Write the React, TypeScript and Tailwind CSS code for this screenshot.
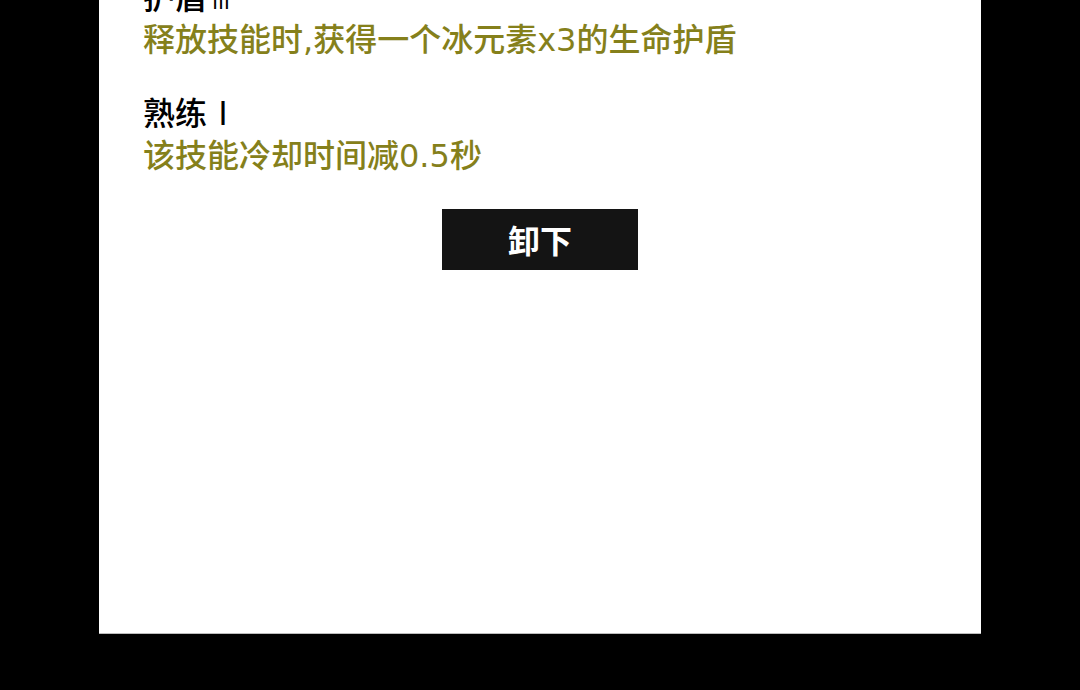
const effects = [
  {
    name: '护盾',
    level: 'Ⅲ',
    levelClass: 'ml-1 text-[20px]',
    text: '释放技能时,获得一个冰元素x3的生命护盾',
  },
  {
    name: '熟练',
    level: 'Ⅰ',
    levelClass: 'text-[32px]',
    text: '该技能冷却时间减0.5秒',
  },
]

export default function App() {
  return (
    <div className="flex h-screen flex-col overflow-hidden bg-black px-[99px] pb-14 font-['DejaVu_Sans','Noto_Sans_CJK_SC',sans-serif]">
      {/* Scrolled part way down, so the first heading is cut by the top edge */}
      <main className="flex-1 overflow-hidden border-b border-[#bdbdbd] bg-white px-11">
        <div className="-mt-[23px] flex flex-col gap-8">
          {effects.map((effect) => (
            <section key={effect.name} className="text-[32px] leading-[42px] font-medium">
              <h2 className="text-black">
                {effect.name}
                <span className={`font-['Noto_Sans_CJK_SC',sans-serif] leading-none font-normal ${effect.levelClass}`}>
                  {effect.level}
                </span>
              </h2>
              <p className="text-[#85801b]">{effect.text}</p>
            </section>
          ))}
          <button
            type="button"
            className="mx-auto h-[61px] w-[196px] bg-[#141414] pt-1 text-[32px] leading-[42px] font-bold text-white"
          >
            卸下
          </button>
        </div>
      </main>
    </div>
  )
}
